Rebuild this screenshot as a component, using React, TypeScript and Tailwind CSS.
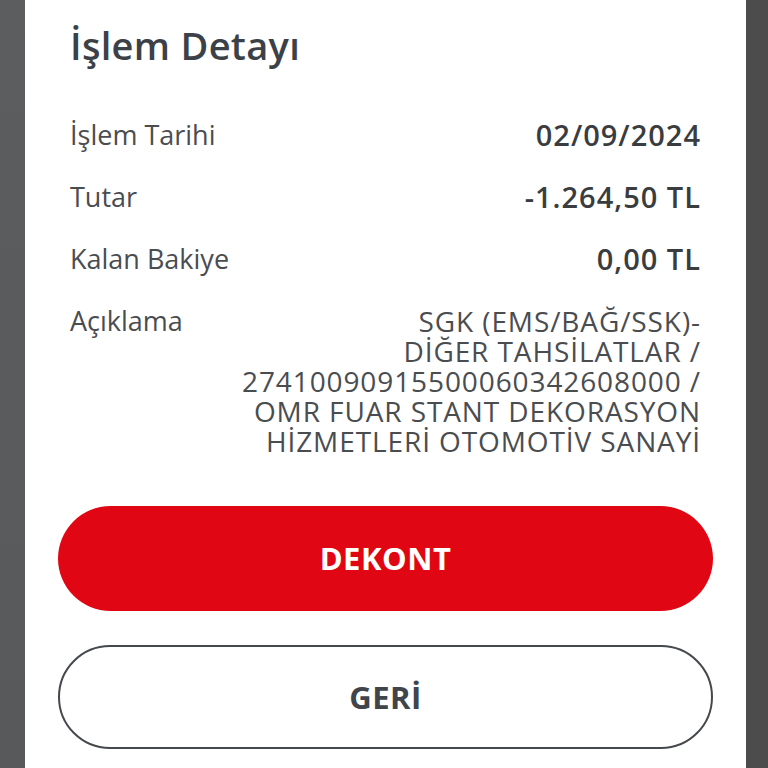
const rows = [
  { label: "İşlem Tarihi", value: "02/09/2024" },
  { label: "Tutar", value: "-1.264,50 TL" },
  { label: "Kalan Bakiye", value: "0,00 TL" },
];

const description = [
  "SGK (EMS/BAĞ/SSK)-",
  "DİĞER TAHSİLATLAR /",
  "27410090915500060342608000 /",
  "OMR FUAR STANT DEKORASYON",
  "HİZMETLERİ OTOMOTİV SANAYİ",
];

export default function App() {
  return (
    <div className="flex h-[768px] w-[768px] overflow-hidden bg-[#4f5051] font-['Open_Sans',sans-serif]">
      <div className="w-[25px] flex-none bg-gradient-to-b from-[#5c5d5e] to-[#58595a]" />
      <div className="flex w-[721px] flex-none flex-col bg-white pt-[22px]">
        <h1 className="px-[45px] text-[38px] font-semibold leading-[46px] tracking-[0.3px] text-[#3b4147]">
          İşlem Detayı
        </h1>

        <div className="mt-[52px] flex flex-col gap-[32px] px-[45px] text-[27px] leading-[30px]">
          {rows.map((r) => (
            <div key={r.label} className="flex items-start justify-between">
              <span className="text-[#4a4d50]">{r.label}</span>
              <span className="text-[29px] font-semibold tracking-[1px] text-[#3a3d40]">{r.value}</span>
            </div>
          ))}
          <div className="flex items-start justify-between">
            <span className="text-[#4a4d50]">Açıklama</span>
            <div className="flex flex-col items-end text-right text-[28px] leading-[30px] tracking-[0.9px] text-[#4a4d50]">
              {description.map((line) => (
                <span key={line}>{line}</span>
              ))}
            </div>
          </div>
        </div>

        <div className="mt-[50px] flex flex-col gap-[34px] px-[33px]">
          <button
            type="button"
            className="flex h-[105px] items-center justify-center rounded-full bg-[#e10613] text-[31px] font-bold tracking-[0.5px] text-white"
          >
            DEKONT
          </button>
          <button
            type="button"
            className="flex h-[104px] items-center justify-center rounded-full border-2 border-[#45494d] bg-white text-[31px] font-bold tracking-[0.5px] text-[#3f454b]"
          >
            GERİ
          </button>
        </div>
      </div>
      <div className="flex-1 bg-[#4c4c4c]" />
    </div>
  );
}
